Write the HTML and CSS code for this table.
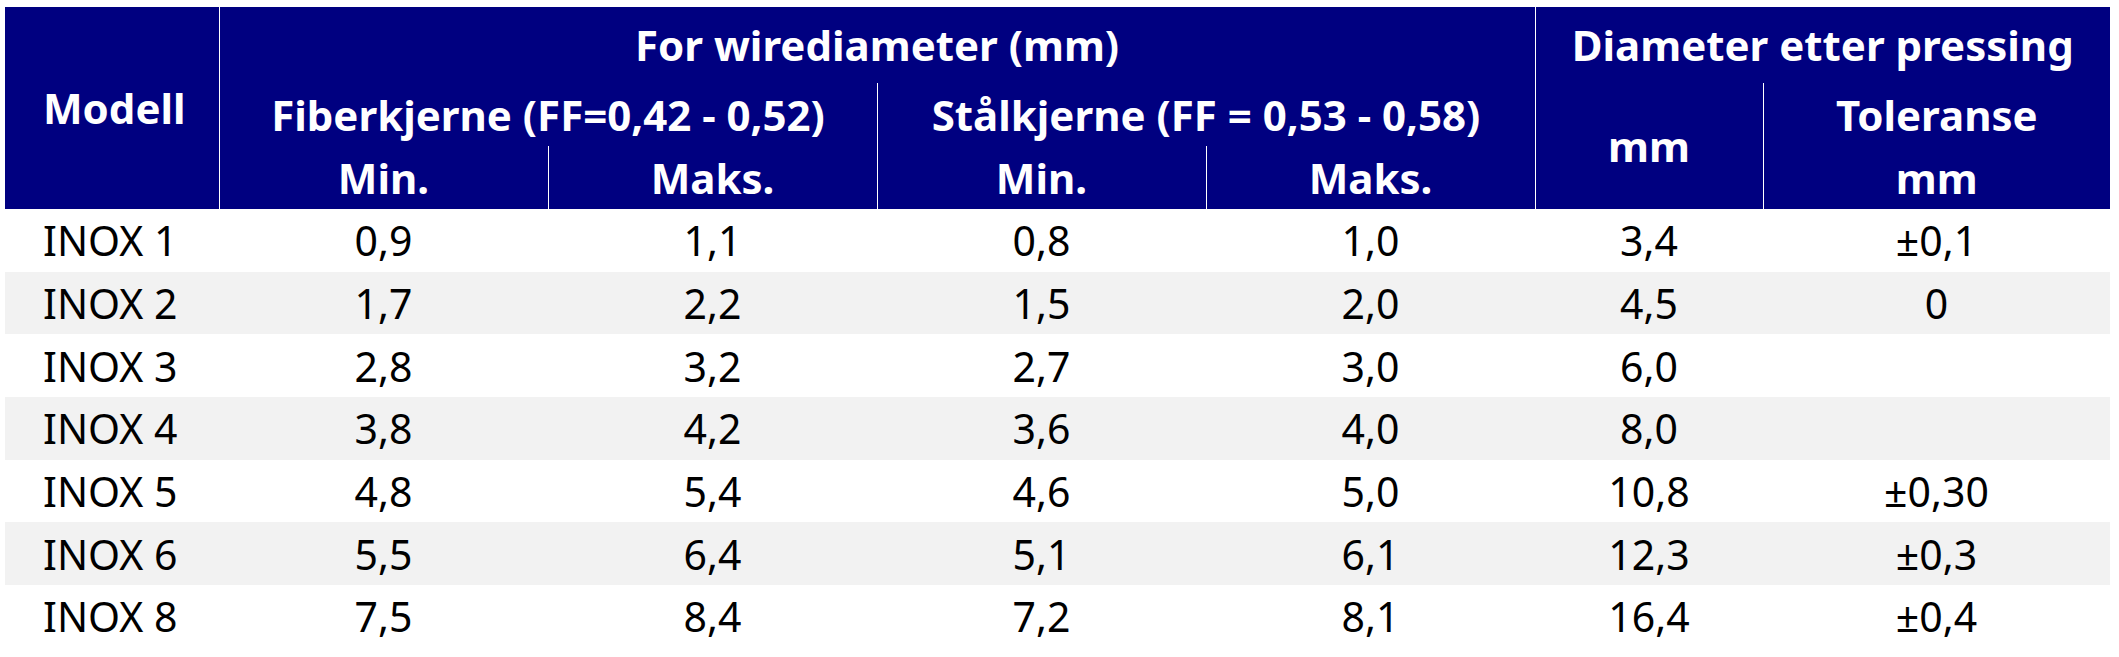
FILE: index.html
```html
<!DOCTYPE html>
<html lang="no">
<head>
<meta charset="utf-8">
<title>INOX</title>
<link rel="stylesheet" href="styles.css">
</head>
<body>
<table class="spec">
  <colgroup>
    <col class="c-model">
    <col class="c-val">
    <col class="c-val">
    <col class="c-val">
    <col class="c-val">
    <col class="c-mm">
    <col class="c-tol">
  </colgroup>
  <thead>
    <tr class="h1">
      <th rowspan="3" class="model">Modell</th>
      <th colspan="4">For wirediameter (mm)</th>
      <th colspan="2" class="sep">Diameter etter pressing</th>
    </tr>
    <tr class="h2">
      <th colspan="2">Fiberkjerne (FF=0,42 - 0,52)</th>
      <th colspan="2" class="sep">Stålkjerne (FF = 0,53 - 0,58)</th>
      <th rowspan="2" class="sep">mm</th>
      <th class="sep">Toleranse</th>
    </tr>
    <tr class="h3">
      <th>Min.</th>
      <th class="sep">Maks.</th>
      <th class="sep">Min.</th>
      <th class="sep">Maks.</th>
      <th class="sep">mm</th>
    </tr>
  </thead>
  <tbody>
    <tr><td class="model">INOX 1</td><td>0,9</td><td>1,1</td><td>0,8</td><td>1,0</td><td>3,4</td><td>±0,1</td></tr>
    <tr><td class="model">INOX 2</td><td>1,7</td><td>2,2</td><td>1,5</td><td>2,0</td><td>4,5</td><td>0</td></tr>
    <tr><td class="model">INOX 3</td><td>2,8</td><td>3,2</td><td>2,7</td><td>3,0</td><td>6,0</td><td></td></tr>
    <tr><td class="model">INOX 4</td><td>3,8</td><td>4,2</td><td>3,6</td><td>4,0</td><td>8,0</td><td></td></tr>
    <tr><td class="model">INOX 5</td><td>4,8</td><td>5,4</td><td>4,6</td><td>5,0</td><td>10,8</td><td>±0,30</td></tr>
    <tr><td class="model">INOX 6</td><td>5,5</td><td>6,4</td><td>5,1</td><td>6,1</td><td>12,3</td><td>±0,3</td></tr>
    <tr><td class="model">INOX 8</td><td>7,5</td><td>8,4</td><td>7,2</td><td>8,1</td><td>16,4</td><td>±0,4</td></tr>
  </tbody>
</table>
</body>
</html>
```

FILE: styles.css
```css
html, body {
  margin: 0;
  padding: 0;
  background: #ffffff;
}

body {
  font-family: "Noto Sans", "Open Sans", "DejaVu Sans", sans-serif;
}

.spec {
  margin: 7px 0 0 5px;
  width: 2105px;
  table-layout: fixed;
  border-collapse: collapse;
  border-spacing: 0;
  font-size: 41px;
  line-height: 48px;
}

.c-model { width: 214px; }
.c-val { width: 329px; }
.c-mm { width: 228px; }
.c-tol { width: 347px; }

.spec th {
  background: #000080;
  color: #ffffff;
  font-size: 42px;
  font-weight: 700;
  text-align: center;
  vertical-align: middle;
  padding: 0;
  white-space: nowrap;
}

.spec th.model {
  border-right: 1px solid #ffffff;
}

.spec th.sep {
  border-left: 1px solid #ffffff;
}

.h1 { height: 76px; }
.h2 { height: 63px; }
.h3 { height: 63px; }

.spec td {
  height: 62.7px;
  padding: 0;
  color: #000000;
  text-align: center;
  vertical-align: middle;
  white-space: nowrap;
}

.spec .model {
  text-align: left;
  padding-left: 38px;
}

.spec tbody tr:nth-child(even) td {
  background: #f2f2f2;
}
```
